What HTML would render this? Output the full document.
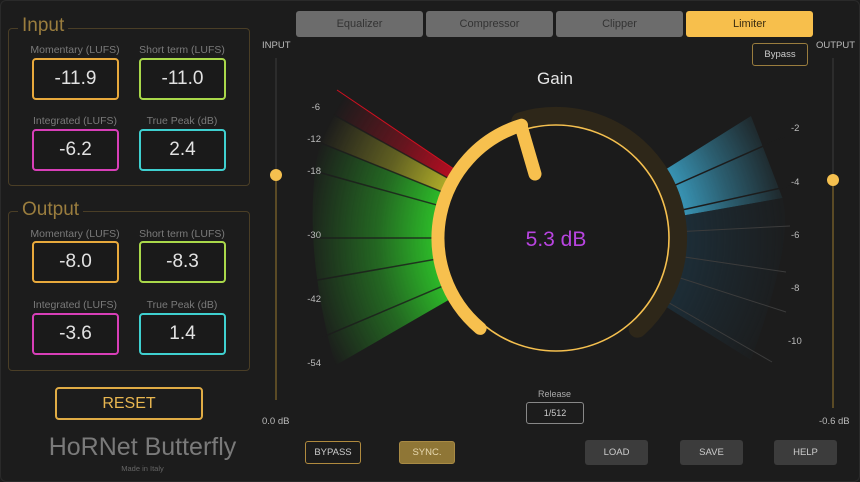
<!DOCTYPE html>
<html><head><meta charset="utf-8"><style>
*{margin:0;padding:0;box-sizing:border-box}
body{width:860px;height:482px;background:#1c1c1c;font-family:"Liberation Sans",sans-serif;position:relative;overflow:hidden}
.a{position:absolute}
.lbl{position:absolute;color:#7a7a7a;font-size:10.5px;text-align:center;width:130px}
.box{position:absolute;border:2px solid;border-radius:4px;width:87px;height:42px;color:#e2e2e2;font-size:19px;display:flex;align-items:center;justify-content:center;background:#1a1a1a}
.grp{position:absolute;border:1.5px solid #4a3e26;border-radius:4px;left:8px;width:242px}
.leg{position:absolute;color:#9a7d3e;font-size:19px;background:#1c1c1c;padding:0 4px;line-height:20px}
.tab{position:absolute;top:11px;height:26px;width:127px;background:#6c6c6c;border-radius:3px;color:#333;font-size:11px;display:flex;align-items:center;justify-content:center}
.btn{position:absolute;font-size:9.5px;display:flex;align-items:center;justify-content:center;color:#ccc;border-radius:3px}
.t{position:absolute;color:#bbb;font-size:9.5px}
</style></head><body>
<div class="a" style="left:0;top:0;width:860px;height:482px;border:1px solid #2a2a2a;border-radius:6px"></div>

<div class="grp" style="top:28px;height:158px"></div>
<div class="leg" style="left:18px;top:16px">Input</div>
<div class="lbl" style="left:10px;top:44px">Momentary (LUFS)</div>
<div class="lbl" style="left:117px;top:44px">Short term (LUFS)</div>
<div class="box" style="left:32px;top:58px;border-color:#e8a93c">-11.9</div>
<div class="box" style="left:139px;top:58px;border-color:#a9d84a">-11.0</div>
<div class="lbl" style="left:10px;top:115px">Integrated (LUFS)</div>
<div class="lbl" style="left:117px;top:115px">True Peak (dB)</div>
<div class="box" style="left:32px;top:129px;border-color:#d83fb8">-6.2</div>
<div class="box" style="left:139px;top:129px;border-color:#3fd0d0">2.4</div>

<div class="grp" style="top:211px;height:160px"></div>
<div class="leg" style="left:18px;top:200px">Output</div>
<div class="lbl" style="left:10px;top:228px">Momentary (LUFS)</div>
<div class="lbl" style="left:117px;top:228px">Short term (LUFS)</div>
<div class="box" style="left:32px;top:241px;border-color:#e8a93c">-8.0</div>
<div class="box" style="left:139px;top:241px;border-color:#a9d84a">-8.3</div>
<div class="lbl" style="left:10px;top:299px">Integrated (LUFS)</div>
<div class="lbl" style="left:117px;top:299px">True Peak (dB)</div>
<div class="box" style="left:32px;top:313px;border-color:#d83fb8">-3.6</div>
<div class="box" style="left:139px;top:313px;border-color:#3fd0d0">1.4</div>

<div class="a" style="left:55px;top:387px;width:148px;height:33px;border:2px solid #e0ac45;border-radius:4px;color:#e8b650;font-size:16px;display:flex;align-items:center;justify-content:center">RESET</div>
<div class="a" style="left:30px;top:433px;width:225px;text-align:center;color:#7a7a7a;font-size:25px">HoRNet Butterfly</div>
<div class="a" style="left:30px;top:464px;width:225px;text-align:center;color:#666;font-size:7.5px">Made in Italy</div>

<div class="tab" style="left:296px">Equalizer</div>
<div class="tab" style="left:426px">Compressor</div>
<div class="tab" style="left:556px">Clipper</div>
<div class="tab" style="left:686px;background:#f7bf4c;color:#3a2c10">Limiter</div>
<div class="btn" style="left:752px;top:43px;width:56px;height:23px;border:1.5px solid #9a7d3e">Bypass</div>

<div class="t" style="left:262px;top:40px">INPUT</div>
<div class="t" style="left:816px;top:40px">OUTPUT</div>
<div class="a" style="left:275px;top:58px;width:2px;height:342px;background:#2c2c2c"></div>
<div class="a" style="left:275px;top:176px;width:2px;height:224px;background:#5a4a25"></div>
<div class="a" style="left:270px;top:169px;width:12px;height:12px;border-radius:50%;background:#f5c04f"></div>
<div class="a" style="left:832px;top:58px;width:2px;height:350px;background:#2c2c2c"></div>
<div class="a" style="left:832px;top:180px;width:2px;height:228px;background:#5a4a25"></div>
<div class="a" style="left:827px;top:174px;width:12px;height:12px;border-radius:50%;background:#f5c04f"></div>
<div class="t" style="left:262px;top:416px">0.0 dB</div>
<div class="t" style="left:819px;top:416px">-0.6 dB</div>

<svg class="a" style="left:0;top:0" width="860" height="482">
<defs>
<radialGradient id="gl" gradientUnits="userSpaceOnUse" cx="556" cy="238" r="255">
<stop offset="0.45" stop-color="#fff" stop-opacity="1"/><stop offset="0.7" stop-color="#fff" stop-opacity="0.45"/><stop offset="1" stop-color="#fff" stop-opacity="0"/></radialGradient>
<radialGradient id="gr" gradientUnits="userSpaceOnUse" cx="556" cy="238" r="235">
<stop offset="0.45" stop-color="#fff" stop-opacity="1"/><stop offset="0.75" stop-color="#fff" stop-opacity="0.45"/><stop offset="1" stop-color="#fff" stop-opacity="0.05"/></radialGradient>
<mask id="ml"><rect width="860" height="482" fill="url(#gl)"/></mask>
<mask id="mr"><rect width="860" height="482" fill="url(#gr)"/></mask>
</defs>
<g mask="url(#ml)">
<path d="M556 238 L344.6 95.4 L332.9 114.4Z" fill="#c00d22"/>
<path d="M556 238 L332.9 114.4 L319.6 142.4Z" fill="#b8b62a"/>
<path d="M556 238 L319.6 142.4 Q300 238 335.2 365.5Z" fill="#2ec62a"/>
</g>
<g stroke="#1c1c1c" stroke-width="1.5" opacity="0.8">
<line x1="556" y1="238" x2="332.9" y2="114.4"/><line x1="556" y1="238" x2="319.6" y2="142.4"/>
<line x1="556" y1="238" x2="310.2" y2="169.9"/><line x1="556" y1="238" x2="301" y2="238"/>
<line x1="556" y1="238" x2="304.9" y2="282.3"/><line x1="556" y1="238" x2="321.2" y2="337.7"/>
</g>
<line x1="556" y1="238" x2="337" y2="90" stroke="#d01020" stroke-width="1"/>
<g mask="url(#mr)">
<path d="M556 238 L751 116 L782.5 198Z" fill="#3fb0d8"/>
<path d="M556 238 L782.5 198 Q795 238 751 360Z" fill="#1e3a4c" opacity="0.7"/>
</g>
<g stroke="#1c1c1c" stroke-width="1.5"><line x1="556" y1="238" x2="786" y2="136"/><line x1="556" y1="238" x2="790" y2="186"/></g>
<g stroke="#3c3c3c" stroke-width="1"><line x1="556" y1="238" x2="790" y2="226"/><line x1="556" y1="238" x2="786" y2="272"/><line x1="556" y1="238" x2="786" y2="312"/><line x1="556" y1="238" x2="772" y2="362"/></g>
<path d="M520.3 121.3 A122 122 0 0 1 637.6 328.7" fill="none" stroke="#2e2719" stroke-width="18" stroke-linecap="round"/>
<circle cx="556" cy="238" r="113" fill="#1b1b1b" stroke="#f5c04f" stroke-width="1.6"/>
<path d="M480.1 328.4 A118 118 0 0 1 521.5 125.2" fill="none" stroke="#f7c04e" stroke-width="13" stroke-linecap="round"/>
<line x1="521" y1="126" x2="535" y2="174" stroke="#f7c04e" stroke-width="13" stroke-linecap="round"/>
<text x="556" y="246" text-anchor="middle" font-family="Liberation Sans" font-size="21" fill="#b844e0">5.3 dB</text>
<text x="555" y="84" text-anchor="middle" font-family="Liberation Sans" font-size="17" fill="#e6e6e6">Gain</text>
<g font-family="Liberation Sans" font-size="9.5" fill="#bbb" text-anchor="end">
<text x="320" y="110">-6</text><text x="321" y="142">-12</text><text x="321" y="174">-18</text><text x="321" y="238">-30</text><text x="321" y="302">-42</text><text x="321" y="366">-54</text>
</g>
<g font-family="Liberation Sans" font-size="9.5" fill="#bbb">
<text x="791" y="131">-2</text><text x="791" y="185">-4</text><text x="791" y="238">-6</text><text x="791" y="291">-8</text><text x="788" y="344">-10</text>
</g>
</svg>

<div class="t" style="left:538px;top:389px;color:#aaa;font-size:9px">Release</div>
<div class="btn" style="left:526px;top:402px;width:58px;height:22px;border:1.5px solid #888;font-size:9px">1/512</div>
<div class="btn" style="left:305px;top:441px;width:56px;height:23px;border:1.5px solid #b08a3e">BYPASS</div>
<div class="btn" style="left:399px;top:441px;width:56px;height:23px;background:#8f7636;border:1.5px solid #a88a44;color:#e8d9b0">SYNC.</div>
<div class="btn" style="left:585px;top:440px;width:63px;height:25px;background:#3c3c3c">LOAD</div>
<div class="btn" style="left:680px;top:440px;width:63px;height:25px;background:#3c3c3c">SAVE</div>
<div class="btn" style="left:774px;top:440px;width:63px;height:25px;background:#3c3c3c">HELP</div>
</body></html>
